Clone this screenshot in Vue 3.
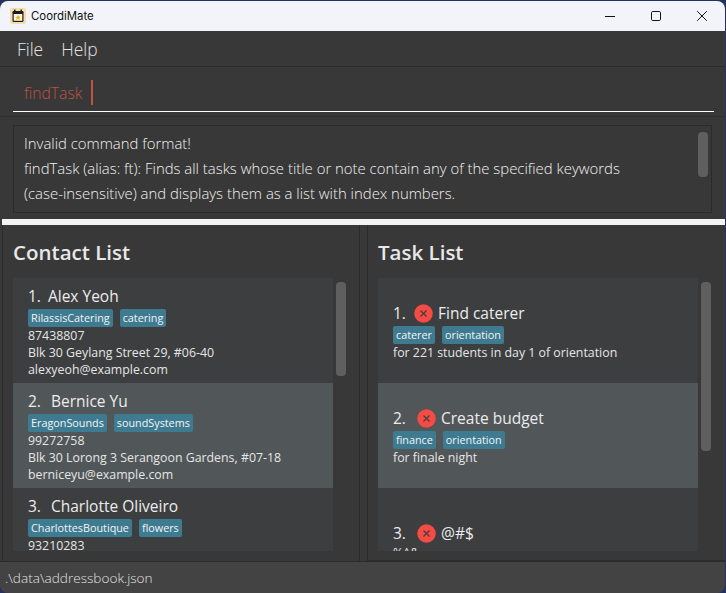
<script setup>
const contacts = [
  { n: '1.', name: 'Alex Yeoh', tight: true, tags: ['RilassisCatering', 'catering'], lines: ['87438807', 'Blk 30 Geylang Street 29, #06-40', 'alexyeoh@example.com'] },
  { n: '2.', name: 'Bernice Yu', tags: ['EragonSounds', 'soundSystems'], lines: ['99272758', 'Blk 30 Lorong 3 Serangoon Gardens, #07-18', 'berniceyu@example.com'], sel: true },
  { n: '3.', name: 'Charlotte Oliveiro', tags: ['CharlottesBoutique', 'flowers'], lines: ['93210283'] },
]
const tasks = [
  { n: '1.', name: 'Find caterer', tight: true, tags: ['caterer', 'orientation'], note: 'for 221 students in day 1 of orientation' },
  { n: '2.', name: 'Create budget', tags: ['finance', 'orientation'], note: 'for finale night', sel: true },
  { n: '3.', name: '@#$', tags: [], note: '%^&' },
]
</script>

<template>
  <div class="screen">
    <div class="window">
      <header class="titlebar">
        <svg class="appicon" width="16" height="16" viewBox="0 0 16 16">
          <rect x="0" y="0" width="16" height="16" rx="2" fill="#f6dfa6" />
          <rect x="2.5" y="3" width="11" height="11" rx="1.2" fill="#1d1d1d" />
          <rect x="4" y="1.5" width="1.5" height="3" fill="#1d1d1d" />
          <rect x="10.5" y="1.5" width="1.5" height="3" fill="#1d1d1d" />
          <rect x="3.7" y="6" width="8.6" height="6.8" fill="#fbf6e6" />
          <path d="M8 6.8l.9 1.7 1.8.2-1.3 1.2.4 1.8L8 11l-1.8.9.4-1.8-1.3-1.2 1.8-.2z" fill="#f0b41c" />
        </svg>
        <span class="apptitle">CoordiMate</span>
        <div class="controls">
          <svg width="12" height="12" viewBox="0 0 12 12"><path d="M1 6.5h10" stroke="#111" stroke-width="1" fill="none" /></svg>
          <svg width="12" height="12" viewBox="0 0 12 12"><rect x="1.5" y="1.5" width="9" height="9" rx="1.2" stroke="#111" stroke-width="1" fill="none" /></svg>
          <svg width="12" height="12" viewBox="0 0 12 12"><path d="M1.2 1.2l9.6 9.6M10.8 1.2l-9.6 9.6" stroke="#111" stroke-width="1" fill="none" /></svg>
        </div>
      </header>

      <nav class="menubar"><span>File</span><span>Help</span></nav>

      <section class="commandbox">
        <div class="commandfield"><span class="cmdtext">findTask</span><i class="caret"></i></div>
      </section>

      <section class="resultwrap">
        <div class="resultbox">
          <p>Invalid command format!</p>
          <p>findTask (alias: ft): Finds all tasks whose title or note contain any of the specified keywords</p>
          <p>(case-insensitive) and displays them as a list with index numbers.</p>
          <i class="thumb resultthumb"></i>
        </div>
      </section>

      <div class="divider"></div>

      <main class="panes">
        <section class="pane left">
          <h2>Contact List</h2>
          <div class="listwrap">
            <div class="list">
              <article v-for="c in contacts" :key="c.n" class="card contact" :class="{ sel: c.sel, tight: c.tight }">
                <div class="name"><span class="idx">{{ c.n }}</span>{{ c.name }}</div>
                <div class="tags"><span v-for="t in c.tags" :key="t" class="tag">{{ t }}</span></div>
                <div v-for="l in c.lines" :key="l" class="line">{{ l }}</div>
              </article>
            </div>
            <i class="thumb contactthumb"></i>
          </div>
        </section>
        <section class="pane right">
          <h2>Task List</h2>
          <div class="listwrap">
            <div class="list">
              <article v-for="t in tasks" :key="t.n" class="card task" :class="{ sel: t.sel, tight: t.tight }">
                <div class="name">
                  <span class="tidx">{{ t.n }}</span>
                  <svg class="mark" width="19" height="19" viewBox="0 0 19 19">
                    <circle cx="9.5" cy="9.5" r="9.3" fill="#f44b45" />
                    <path d="M6.5 6.5l6 6M12.5 6.5l-6 6" stroke="#4a3c40" stroke-width="1.3" fill="none" />
                  </svg>
                  <span>{{ t.name }}</span>
                </div>
                <div v-if="t.tags.length" class="tags"><span v-for="g in t.tags" :key="g" class="tag">{{ g }}</span></div>
                <div class="line">{{ t.note }}</div>
              </article>
            </div>
            <i class="thumb taskthumb"></i>
          </div>
        </section>
      </main>

      <footer class="status">.\data\addressbook.json</footer>
    </div>
  </div>
</template>

<style>
html, body { margin: 0; background: #24325f; overflow: hidden; }
</style>

<style scoped>
.screen {
  width: 726px;
  height: 593px;
  box-sizing: border-box;
  padding: 1px 1px 0 0;
  font-family: "Open Sans", "Noto Sans", sans-serif;
}
.window {
  height: 592px;
  display: flex;
  flex-direction: column;
  border-radius: 8px;
  overflow: hidden;
  background: #383838;
  color: #e6e6e6;
}
.titlebar {
  flex: 0 0 30px;
  background: #f2f4f9;
  display: flex;
  align-items: center;
  padding-left: 10px;
  color: #111;
}
.appicon { margin-right: 5px; }
.apptitle { font-family: "Inter", sans-serif; font-size: 11.4px; }
.controls {
  margin-left: auto;
  display: flex;
  gap: 34px;
  padding-right: 17px;
}
.menubar {
  flex: 0 0 35px;
  display: flex;
  align-items: center;
  gap: 18px;
  padding-left: 17px;
  font-size: 17.4px;
  font-weight: 350;
  color: #e2e2e2;
  box-sizing: border-box;
}
.commandbox {
  flex: 0 0 51px;
  box-sizing: border-box;
  border-top: 1px solid #2c2c2c;
  border-bottom: 1px solid #2f2f2f;
  padding: 0 11px 0 13px;
}
.commandfield {
  height: 45px;
  box-sizing: border-box;
  border-bottom: 1px solid #fff;
  display: flex;
  align-items: center;
  padding: 7px 0 0 11px;
}
.cmdtext { font-size: 15.7px; font-weight: 350; color: #bd5340; }
.caret { width: 2px; height: 25px; margin-left: 8.5px; background: #bd5340; }
.resultwrap { flex: 0 0 102px; padding: 8px 13px 0 13px; box-sizing: border-box; }
.resultbox {
  position: relative;
  height: 88px;
  box-sizing: border-box;
  border: 1px solid #2b2b2b;
  padding: 5px 0 0 10px;
  font-size: 14.9px;
  font-weight: 350;
  line-height: 25px;
  color: #f2f2f2;
}
.resultbox p { margin: 0; white-space: nowrap; }
.thumb {
  position: absolute;
  width: 10px;
  background: #5f5f5f;
  border-radius: 4px;
}
.resultthumb { right: 3px; top: 6px; height: 45px; }
.divider {
  flex: 0 0 6px;
  margin: 0 0 0 2px;
  background: #f3f3f3;
}
.panes { flex: 1; display: flex; min-height: 0; padding-left: 2px; }
.pane { height: 336px; box-sizing: border-box; }
.left { width: 358px; padding-left: 10px; border-left: 1px solid #2b2b2b; border-right: 1px solid #2b2b2b; }
.right { margin-left: 7px; width: 358px; padding-left: 10px; border-left: 1px solid #2b2b2b; border-bottom: 1px solid #2b2b2b; }
h2 {
  margin: 0;
  height: 53px;
  line-height: 54px;
  font-size: 20.5px;
  font-weight: 600;
  color: #e8e8e8;
}
.listwrap { position: relative; height: 273px; }
.list { width: 320px; height: 273px; overflow: hidden; background: #3c3e3f; }
.card {
  height: 105px;
  box-sizing: border-box;
  padding-left: 15px;
  background: #3c3e3f;
}
.card.sel { background: #515658; }
.contact { padding-top: 7px; }
.name {
  font-size: 15.5px;
  font-weight: 500;
  line-height: 22px;
  color: #ececec;
  display: flex;
  align-items: center;
}
.idx { margin-right: 10px; }
.tight .idx { margin-right: 7px; }
.tags { display: flex; gap: 7px; margin-top: 2px; height: 18px; }
.tag {
  background: #3e7b91;
  color: #f4f4f4;
  border-radius: 2px;
  font-size: 10.8px;
  line-height: 18px;
  padding: 0 3px;
}
.line { font-size: 12.35px; line-height: 17px; color: #e6e6e6; white-space: nowrap; }
.task {
  display: flex;
  flex-direction: column;
  justify-content: center;
  padding-top: 2px;
}
.task .name { flex: 0 0 22px; }
.task .tags { flex: 0 0 18px; }
.task .line { flex: 0 0 17px; }
.tidx { width: 24px; }
.tight .tidx { width: 21px; }
.mark { margin-right: 5px; }
.contactthumb { left: 323px; top: 4px; height: 94px; }
.taskthumb { left: 323px; top: 4px; height: 169px; }
.status {
  flex: 0 0 32px;
  box-sizing: border-box;
  background: #434343;
  border-top: 1px solid #2b2b2b;
  padding-left: 5px;
  font-size: 13.6px;
  font-weight: 350;
  line-height: 31px;
  color: #e2e2e2;
}
</style>
